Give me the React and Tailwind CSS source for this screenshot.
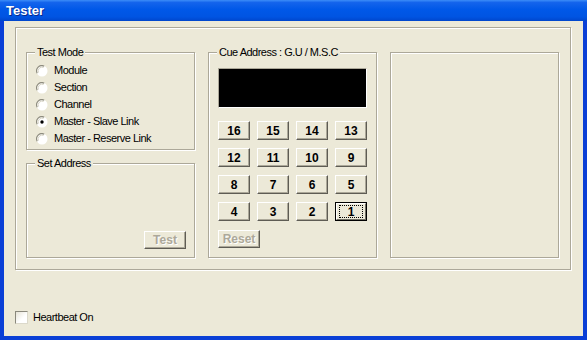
import React from "react";

const font = { fontFamily: '"Liberation Sans", Arial, sans-serif' };

function Group({ label, className = "", children }) {
  return (
    <div
      className={`relative border border-[#ACA899] shadow-[inset_1px_1px_0_#ffffff,1px_1px_0_#ffffff] ${className}`}
    >
      {label && (
        <span className="absolute -top-[8px] left-[8px] bg-[#ECE9D8] px-[2px] text-[11px] leading-[14px] tracking-[-0.5px] text-black">
          {label}
        </span>
      )}
      {children}
    </div>
  );
}

function Radio({ checked }) {
  return (
    <svg width="12" height="12" viewBox="0 0 12 12" className="shrink-0">
      <circle cx="6" cy="6" r="5.5" fill="#ffffff" />
      <path d="M1.2 8.2 A5.2 5.2 0 0 1 8.2 1.2" stroke="#8E8C7E" strokeWidth="1.2" fill="none" />
      <path d="M2.4 7.6 A4 4 0 0 1 7.6 2.4" stroke="#D8D5C6" strokeWidth="1" fill="none" />
      {checked && <circle cx="6" cy="6" r="1.7" fill="#000" />}
    </svg>
  );
}

function Btn({ children, disabled, focused, className = "" }) {
  if (focused) {
    return (
      <div className={`border border-black bg-[#ECE9D8] ${className}`}>
        <div className="flex h-full w-full items-center justify-center border border-t-white border-l-white border-r-[#716F64] border-b-[#716F64] px-[2px] py-[1px]">
          <div className="flex h-full w-full items-center justify-center border border-dotted border-black text-[12px] font-bold leading-none text-black">
            {children}
          </div>
        </div>
      </div>
    );
  }
  return (
    <div
      className={`flex items-center justify-center border border-t-white border-l-white border-r-[#5E5C54] border-b-[#5E5C54] bg-[#ECE9D8] shadow-[inset_-1px_-1px_0_#ACA899] text-[12px] font-bold leading-none ${
        disabled ? "text-[#ACA899] [text-shadow:1px_1px_0_#ffffff]" : "text-black"
      } ${className}`}
    >
      {children}
    </div>
  );
}

export default function App() {
  const modes = ["Module", "Section", "Channel", "Master - Slave Link", "Master - Reserve Link"];
  const keys = [16, 15, 14, 13, 12, 11, 10, 9, 8, 7, 6, 5, 4, 3, 2, 1];
  return (
    <div
      className="flex h-[340px] w-[587px] flex-col overflow-hidden bg-[#0A3FD6]"
      style={font}
    >
      <div className="flex h-[21px] shrink-0 items-center bg-[linear-gradient(to_bottom,#3C8DF8_0%,#1464EC_12%,#0058E8_45%,#0054E2_80%,#0046CC_100%)] pl-[6px]">
        <span className="text-[13px] font-bold leading-none text-white [text-shadow:1px_1px_0_#0A2A8C]">
          Tester
        </span>
      </div>
      <div className="mx-[4px] mb-[4px] flex flex-1 flex-col bg-[#ECE9D8] pl-[11px] pr-[12px] pt-[6px]">
        <Group className="h-[243px] w-[556px] pl-[10px] pr-[11px] pt-[24px] pb-[11px]">
          <div className="flex h-[206px] gap-[13px]">
            <div className="flex w-[169px] flex-col gap-[13px]">
              <Group label="Test Mode" className="h-[98px] pl-[9px] pt-[9px]">
                <div className="flex flex-col">
                  {modes.map((m, i) => (
                    <div key={m} className="flex h-[17px] items-center gap-[6px]">
                      <Radio checked={i === 3} />
                      <span className="text-[11px] leading-none tracking-[-0.5px] text-black">{m}</span>
                    </div>
                  ))}
                </div>
              </Group>
              <Group label="Set Address" className="flex h-[95px] items-end justify-end pb-[8px] pr-[8px]">
                <Btn disabled className="h-[18px] w-[42px]">
                  Test
                </Btn>
              </Group>
            </div>
            <Group label="Cue Address : G.U / M.S.C" className="flex w-[169px] flex-col pl-[9px] pt-[15px]">
              <div className="h-[40px] w-[149px] border border-t-[#ACA899] border-l-[#ACA899] border-r-white border-b-white bg-black" />
              <div className="mt-[13px] grid w-[149px] grid-cols-[repeat(4,32px)] gap-x-[7px] gap-y-[8px]">
                {keys.map((k) => (
                  <Btn key={k} focused={k === 1} className="h-[19px] w-[32px]">
                    {k}
                  </Btn>
                ))}
              </div>
              <Btn disabled className="mt-[9px] h-[18px] w-[42px]">
                Reset
              </Btn>
            </Group>
            <Group className="w-[169px]" />
          </div>
        </Group>
        <div className="mt-[41px] flex items-center gap-[5px]">
          <div className="h-[13px] w-[13px] border border-t-[#8A887C] border-l-[#8A887C] border-r-[#DCD9CB] border-b-[#DCD9CB] bg-[linear-gradient(135deg,#E6E3D6,#ffffff_60%)]" />
          <span className="text-[11px] leading-none tracking-[-0.5px] text-black">Heartbeat On</span>
        </div>
      </div>
    </div>
  );
}
